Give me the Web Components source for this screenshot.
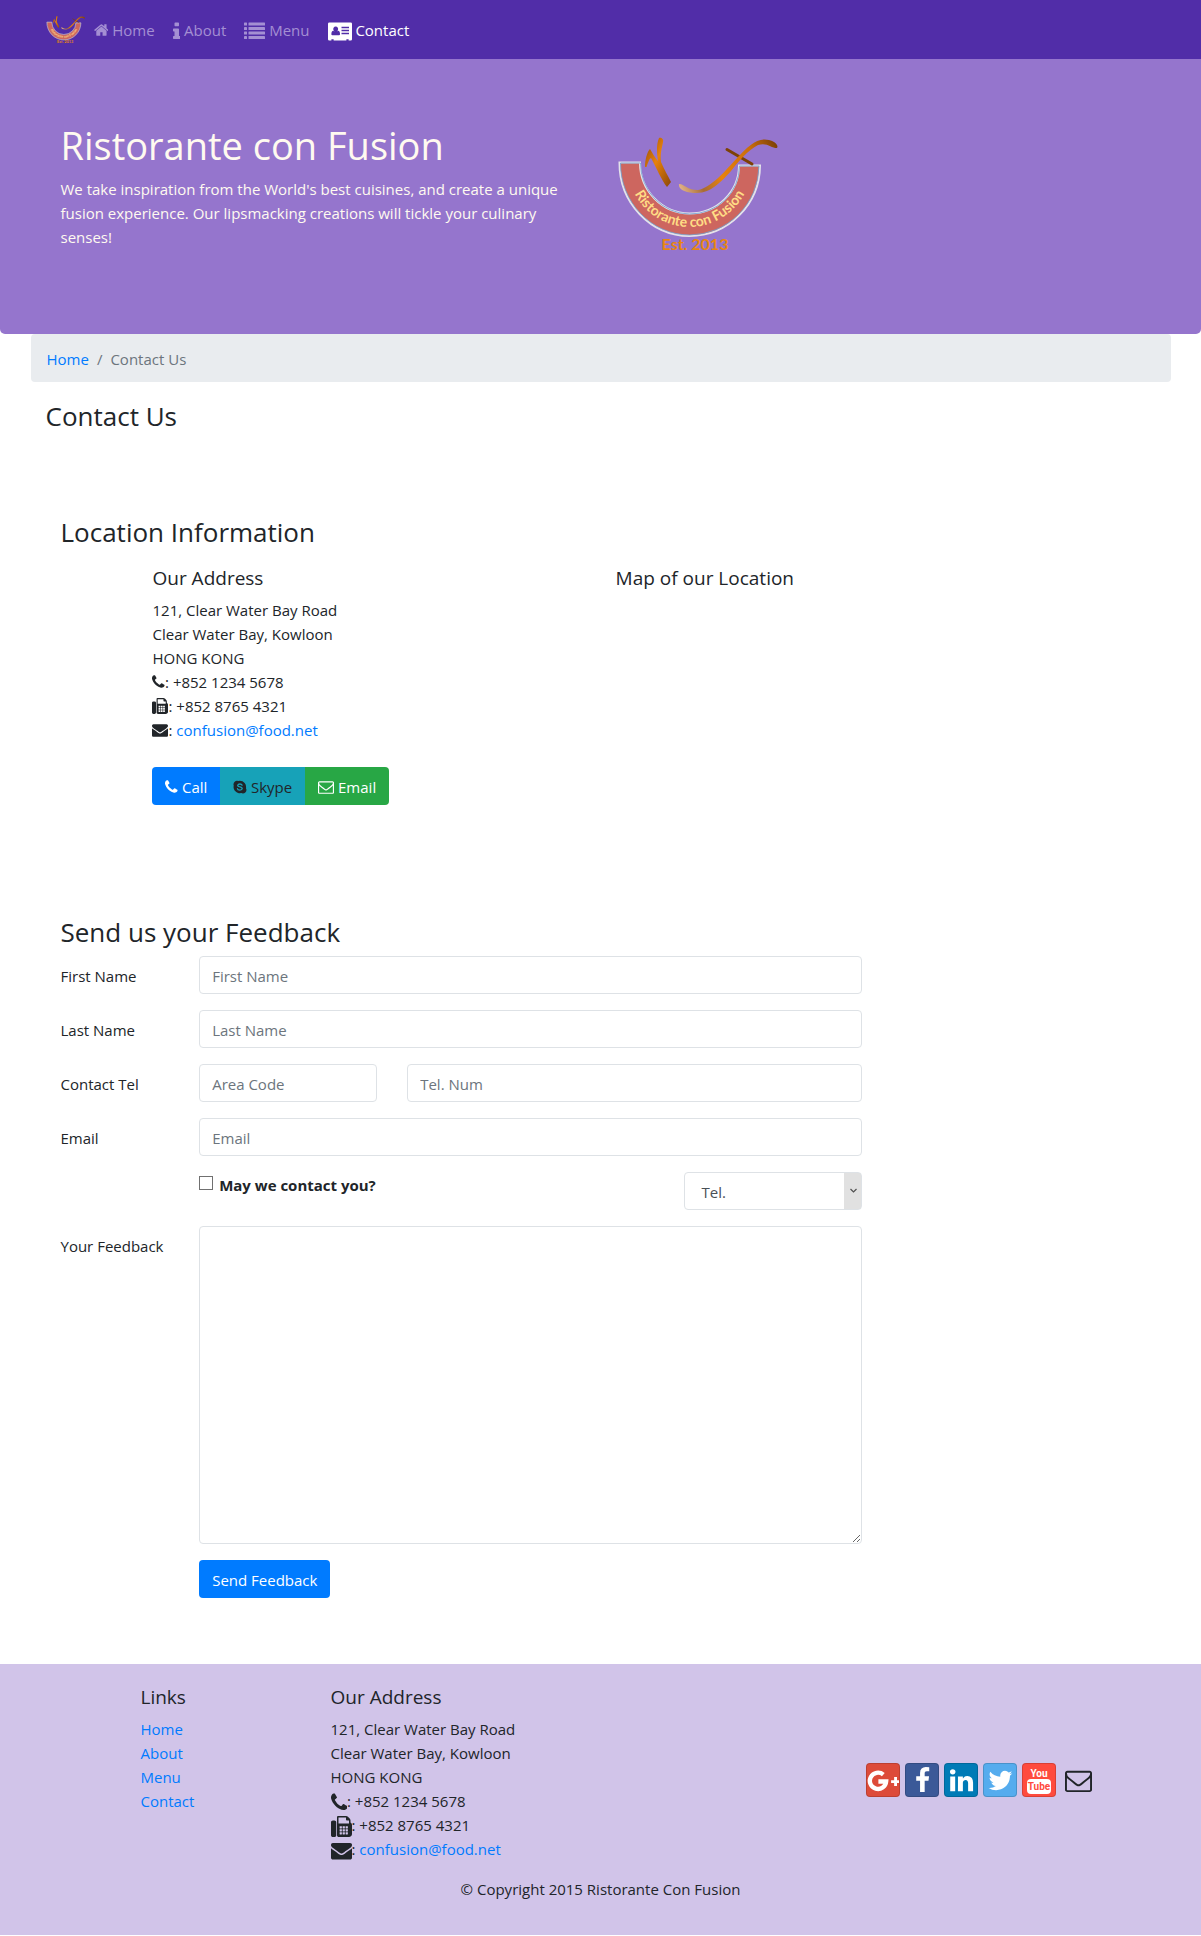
<!DOCTYPE html>
<html lang="en">
<head>
<meta charset="utf-8">
<meta name="viewport" content="width=device-width, initial-scale=1">
<title>Ristorante Con Fusion: Contact Us</title>
<style>
  body {
    margin: 0;
    background: #fff;
    color: #212529;
    font: 15px/24px "Open Sans", "Noto Sans", sans-serif;
  }
</style>
</head>
<body>
<site-nav></site-nav>
<site-hero>
  <span slot="title">Ristorante con Fusion</span>
  We take inspiration from the World's best cuisines, and create a unique fusion experience. Our lipsmacking creations will tickle your culinary senses!
</site-hero>
<main>
  <page-heading>Contact Us</page-heading>
  <location-info></location-info>
  <feedback-form></feedback-form>
</main>
<site-footer></site-footer>

<script>
const key = (x, y) => `M${x} ${y}v-128q0-14-9-23t-23-9h-128q-14 0-23 9t-9 23v128q0 14 9 23t23 9h128q14 0 23-9t9-23z`;
const keys = [928, 1184, 1440].map(x => [1024, 1280, 1536].map(y => key(x, y)).join('')).join('');

/* name: [viewBox x, viewBox width, markup]; every icon is 1792 units high */
const ICONS = {
  home: [64, 1664, '<path d="M1472 992v480q0 26-19 45t-45 19h-384v-384h-256v384h-384q-26 0-45-19t-19-45v-480q0-1 .5-3t.5-3l575-474 575 474q1 2 1 6zm223-69l-62 74q-8 9-21 11h-3q-13 0-21-7l-692-577-692 577q-12 8-24 7-13-2-21-11l-62-74q-8-10-7-23.5t11-21.5l719-599q32-26 76-26t76 26l244 204v-195q0-14 9-23t23-9h192q14 0 23 9t9 23v408l219 182q10 8 11 21.5t-7 23.5z"/>'],
  info: [576, 640, '<path d="M1216 1344v128q0 26-19 45t-45 19h-512q-26 0-45-19t-19-45v-128q0-26 19-45t45-19h64v-384h-64q-26 0-45-19t-19-45v-128q0-26 19-45t45-19h384q26 0 45 19t19 45v576h64q26 0 45 19t19 45zm-128-1152v192q0 26-19 45t-45 19h-256q-26 0-45-19t-19-45v-192q0-26 19-45t45-19h256q26 0 45 19t19 45z"/>'],
  list: [0, 1792, [128, 512, 896, 1280].map(y => `<rect x="0" y="${y}" width="256" height="256" rx="32"/><rect x="384" y="${y}" width="1408" height="256" rx="32"/>`).join('')],
  card: [0, 2048, '<path fill-rule="evenodd" d="M112 128h1824q112 0 112 112v1312q0 112-112 112h-176v-112h-192v112h-1088v-112h-192v112h-176q-112 0-112-112v-1312q0-112 112-112zM656 464a208 224 0 1 0 1 0zM448 832q-160 20-160 300 0 84 84 84h568q84 0 84-84 0-280-160-300-90 84-208 84t-208-84zM1152 480v128h640v-128zM1152 736v128h640v-128zM1152 992v128h640v-128z"/>'],
  phone: [192, 1408, '<path d="M1600 1240q0 27-10 70.5t-21 68.5q-21 50-122 106-94 51-186 51-27 0-53-3.5t-57.5-12.5-47-14.5-55.5-20.5-49-18q-98-35-175-83-127-79-264-216t-216-264q-48-77-83-175-3-9-18-49t-20.5-55.5-14.5-47-12.5-57.5-3.5-53q0-92 51-186 56-101 106-122 25-11 68.5-21t70.5-10q14 0 21 3 18 6 53 76 11 19 30 54t35 63.5 31 53.5q3 4 17.5 25t21.5 35.5 7 28.5q0 20-28.5 50t-62 55-62 53-28.5 46q0 9 5 22.5t8.5 20.5 14 24 11.5 19q76 137 174 235t235 174q2 1 19 11.5t24 14 20.5 8.5 22.5 5q18 0 46-28.5t53-62 55-62 50-28.5q14 0 28.5 7t35.5 21.5 25 17.5q25 15 53.5 31t63.5 35 54 30q70 35 76 53 3 7 3 21z"/>'],
  fax: [0, 1792, `<path fill-rule="evenodd" d="M288 384q66 0 113 47t47 113v1088q0 66-47 113t-113 47h-128q-66 0-113-47t-47-113v-1088q0-66 47-113t113-47h128zm1376 163q58 34 93 93t35 128v768q0 106-75 181t-181 75h-864q-66 0-113-47t-47-113v-1536q0-40 28-68t68-28h672q40 0 88 20t76 48l152 152q28 28 48 76t20 88v163zM1536 640v-256h-160q-40 0-68-28t-28-68v-160h-640v512h896z${keys}"/>`],
  envelope: [0, 1792, '<path d="M1792 710v794q0 66-47 113t-113 47h-1472q-66 0-113-47t-47-113v-794q44 49 101 87 362 246 497 345 57 42 92.5 65.5t94.5 48 110 24.5h2q51 0 110-24.5t94.5-48 92.5-65.5q170-123 498-345 57-39 100-87zm0-294q0 79-49 151t-122 123q-376 261-468 325-10 7-42.5 31t-54 38.5-52 32.5-57.5 27-50 9h-2q-23 0-50-9t-57.5-27-52-32.5-54-38.5-42.5-31q-91-64-262-182.5t-205-142.5q-62-42-117-115.5t-55-136.5q0-78 41.5-130t118.5-52h1472q65 0 112.5 47t47.5 113z"/>'],
  'envelope-o': [0, 1792, '<path d="M1664 1504v-768q-32 36-69 66-268 206-426 338-51 43-83 67t-86.5 48.5-102.5 24.5h-2q-48 0-102.5-24.5t-86.5-48.5-83-67q-158-132-426-338-37-30-69-66v768q0 13 9.5 22.5t22.5 9.5h1472q13 0 22.5-9.5t9.5-22.5zm0-1051v-24.5l-.5-13-3-12.5-5.5-9-9-7.5-14-2.5h-1472q-13 0-22.5 9.5t-9.5 22.5q0 168 147 284 193 152 401 317 6 5 35 29.5t46 37.5 44.5 31.5 50.5 27.5 43 9h2q20 0 43-9t50.5-27.5 44.5-31.5 46-37.5 35-29.5q208-165 401-317 54-43 100.5-115.5t46.5-131.5zm128-37v1088q0 66-47 113t-113 47h-1472q-66 0-113-47t-47-113v-1088q0-66 47-113t113-47h1472q66 0 113 47t47 113z"/>'],
  skype: [128, 1536, '<path d="M896 200a700 700 0 0 1 687 830a400 400 0 0 1-540 540a700 700 0 0 1-834-834a400 400 0 0 1 540-500q70-36 147-36z"/><path d="M1150 690Q1100 560 900 560T650 720Q650 840 900 890T1165 1070Q1150 1240 900 1240T630 1090" fill="none" stroke="#17a2b8" stroke-width="150" stroke-linecap="round"/>'],
  facebook: [0, 1792, '<path d="M1343 12v264h-157q-86 0-116 36t-30 108v189h293l-39 296h-254v759h-306v-759h-255v-296h255v-218q0-186 104-288.5t277-102.5q147 0 228 12z"/>'],
  linkedin: [0, 1792, '<path d="M477 625v991h-330v-991h330zm21-306q1 73-50.5 122t-135.5 49h-2q-82 0-132-49t-50-122q0-74 51.5-122.5t134.5-48.5 133 48.5 51 122.5zm1166 729v568h-329v-530q0-105-40.5-164.5t-126.5-59.5q-63 0-105.5 34.5t-63.5 85.5q-11 30-11 81v553h-329q2-399 2-647t-1-296l-1-48h329v144h-2q20-32 41-56t56.5-52 87-43.5 114.5-15.5q171 0 275 113.5t104 332.5z"/>'],
  twitter: [0, 1792, '<path d="M1684 408q-67 98-162 167 1 14 1 42 0 130-38 259.5t-115.5 248.5-184.5 210.5-258 146-323 54.5q-271 0-496-145 35 4 78 4 225 0 401-138-105-2-188-64.5t-114-159.5q33 5 61 5 43 0 85-11-112-23-185.5-111.5t-73.5-205.5v-4q68 38 146 41-66-44-105-115t-39-154q0-88 44-163 121 149 294.5 238.5t371.5 99.5q-8-38-8-74 0-134 94.5-228.5t228.5-94.5q140 0 236 102 109-21 205-78-37 115-142 178 93-10 186-50z"/>'],
  gplus: [0, 1792, '<path d="M860 560A430 430 0 1 0 1010 920H600" fill="none" stroke="currentColor" stroke-width="230"/><path d="M1430 690h150v160h160v150h-160v160h-150v-160h-160v-150h160z"/>'],
};

function define(name, html, setup) {
  const template = document.createElement('template');
  template.innerHTML = html;
  customElements.define(name, class extends HTMLElement {
    constructor() {
      super();
      this.attachShadow({ mode: 'open' }).append(template.content.cloneNode(true));
    }
    connectedCallback() { if (setup) setup(this, this.shadowRoot); }
  });
}

/* <fa-icon name="phone" large> */
define('fa-icon', `
<style>
  :host { display: inline-block; height: 16px; vertical-align: -2px; line-height: 0; }
  :host([large]) { height: 21px; vertical-align: -6px; }
  :host([huge]) { height: 27px; vertical-align: 0; }
  svg { height: 100%; width: auto; display: block; fill: currentColor; }
</style>
<svg aria-hidden="true"></svg>`, (host, root) => {
  const [x, width, markup] = ICONS[host.getAttribute('name')];
  const svg = root.querySelector('svg');
  svg.setAttribute('viewBox', `${x} 0 ${width} 1792`);
  svg.innerHTML = markup;
});

define('fusion-logo', `
<style>
  :host { display: block; width: 165px; }
  svg { display: block; width: 100%; height: auto; }
  text { font-family: Lato, "Open Sans", sans-serif; font-weight: 700; }
</style>
<svg viewBox="15 9 165 125" role="img" aria-label="Ristorante con Fusion logo">
  <defs>
    <linearGradient id="gold" x1="0" y1="0" x2="1" y2="1">
      <stop offset="0" stop-color="#8a4708"/><stop offset=".45" stop-color="#e8820c"/><stop offset="1" stop-color="#8a4708"/>
    </linearGradient>
    <linearGradient id="sweep" gradientUnits="userSpaceOnUse" x1="78" y1="68" x2="177" y2="24">
      <stop offset="0" stop-color="#e3b48a"/><stop offset=".2" stop-color="#a86b33"/><stop offset=".4" stop-color="#e8820c"/><stop offset=".75" stop-color="#c96d0c"/><stop offset="1" stop-color="#7a3f06"/>
    </linearGradient>
    <path id="arc" d="M26.500 45a62 62 0 0 0 124 0"/>
  </defs>
  <path d="M18.500 42.500H39A49.500 51 0 0 0 88.500 93.500A49.500 48 0 0 0 138 45.500H159A70.500 71 0 0 1 88.500 116A70.500 73 0 0 1 18.500 42.500z" fill="#cd665f" stroke="#e4e2ea" stroke-width="2"/>
  <path d="M19.500 43H39.500A49.500 51 0 0 0 88.500 94A49.500 48 0 0 0 138.500 46H158A70 70 0 0 1 88.500 115A69.500 72 0 0 1 19.500 43z" fill="none" stroke="#6f9fd0" stroke-width=".8"/>
  <g stroke-linejoin="round" stroke-linecap="round">
    <path d="M44 47C44 40 46 32 49 29C52 34 54 38 57 41C56 34 55 25 58 18C60 17 63 19 62 22C61 28 59 33 60 42C63 49 67 56 70 62L66 67C61 61 55 47 50 38C48 39 47 43 45.500 47z" fill="url(#gold)"/>
    <path d="M126 29.500L151 44" stroke="#7d4106" stroke-width="3" fill="none"/>
    <path d="M78 64C82 63 86 70 97 70C110 68 125 50 137 37C147 26 157 17 168 20C173 21 178 25 176 28C170 28 166 22 157 25C147 30 137 42 130 51C121 61 110 73 96 73C86 73 77 70 78 64z" fill="url(#sweep)"/>
  </g>
  <text font-size="14" fill="#ffdc85" text-anchor="middle"><textPath href="#arc" startOffset="50%">Ristorante con Fusion</textPath></text>
  <text x="94" y="130" font-size="16" fill="#e8860f" text-anchor="middle">Est. 2013</text>
</svg>`);

define('site-nav', `
<style>
  :host { display: block; background: #512da8; }
  nav { max-width: 1110px; margin: 0 auto; padding: 8px 15px; display: flex; align-items: center; min-height: 43px; }
  .brand { margin-right: 8px; }
  fusion-logo { width: 40px; }
  ul { display: flex; gap: 18px; margin: 0; padding: 0; list-style: none; }
  li a { color: #a48fd3; text-decoration: none; white-space: nowrap; }
  li a[aria-current] { color: #fff; }
</style>
<nav>
  <a class="brand" href="#" aria-label="Ristorante Con Fusion"><fusion-logo></fusion-logo></a>
  <ul>
    <li><a href="#"><fa-icon name="home"></fa-icon> Home</a></li>
    <li><a href="#"><fa-icon name="info" large></fa-icon> About</a></li>
    <li><a href="#"><fa-icon name="list" large></fa-icon> Menu</a></li>
    <li><a href="#" aria-current="page"><fa-icon name="card" large></fa-icon> Contact</a></li>
  </ul>
</nav>`);

define('site-hero', `
<style>
  :host { display: block; background: #9575cd; color: floralwhite; border-radius: 0 0 5px 5px; }
  header { max-width: 1110px; margin: 0 auto; padding: 62px 15px 69px; display: grid; grid-template-columns: 1fr 1fr; }
  div { padding: 0 15px; }
  .logo { padding-top: 8px; }
  h1 { margin: 0 0 8px; font-size: 38px; line-height: 48px; font-weight: 400; }
  p { margin: 0 0 16px; }
</style>
<header>
  <div><h1><slot name="title"></slot></h1><p><slot></slot></p></div>
  <div class="logo"><fusion-logo></fusion-logo></div>
</header>`);

define('page-heading', `
<style>
  :host { display: block; max-width: 1140px; margin: 0 auto; }
  ol { display: flex; gap: 8px; list-style: none; margin: 0 0 16px; padding: 13px 16px 11px; background: #e9ecef; border-radius: 4px; color: #6c757d; }
  a { color: #007bff; text-decoration: none; }
  li + li::before { content: "/"; padding-right: 8px; }
  h2 { margin: 0; padding: 0 15px; font-size: 26px; line-height: 36px; font-weight: 400; }
</style>
<nav aria-label="breadcrumb"><ol><li><a href="#">Home</a></li><li aria-current="page">Contact Us</li></ol></nav>
<h2><slot></slot></h2>`);

/* Postal address block; `large` switches to the bigger glyphs */
define('postal-address', `
<style>
  :host { display: block; }
  h3 { margin: 0 0 8px; font-size: 19px; line-height: 24px; font-weight: 400; }
  address { font-style: normal; }
  a { color: #007bff; text-decoration: none; }
</style>
<h3>Our Address</h3>
<address>
  121, Clear Water Bay Road<br>
  Clear Water Bay, Kowloon<br>
  HONG KONG<br>
  <fa-icon name="phone"></fa-icon>: +852 1234 5678<br>
  <fa-icon name="fax"></fa-icon>: +852 8765 4321<br>
  <fa-icon name="envelope"></fa-icon>: <a href="mailto:confusion@food.net">confusion@food.net</a>
</address>`, (host, root) => {
  if (host.hasAttribute('large')) root.querySelectorAll('fa-icon').forEach(i => i.setAttribute('large', ''));
});

define('location-info', `
<style>
  :host { display: block; max-width: 1080px; margin: 0 auto; padding: 80px 30px 59px; }
  h2 { margin: 0 0 16px; font-size: 26px; line-height: 36px; font-weight: 400; }
  h3 { margin: 0; font-size: 19px; line-height: 24px; font-weight: 400; }
  .cols { display: grid; grid-template-columns: 15fr 17fr; margin-left: calc(100% / 12 + 2px); }
  .group { display: inline-flex; margin: 25px 0 50px; border-radius: 4px; overflow: hidden; }
  .group a { padding: 8px 13px 6px; color: #fff; text-decoration: none; white-space: nowrap; }
  .call { background: #007bff; }
  .group .skype { background: #17a2b8; color: #212529; }
  .email { background: #28a745; }
</style>
<h2>Location Information</h2>
<div class="cols">
  <div>
    <postal-address></postal-address>
    <div class="group">
      <a class="call" href="tel:+85212345678"><fa-icon name="phone"></fa-icon> Call</a>
      <a class="skype" href="#"><fa-icon name="skype"></fa-icon> Skype</a>
      <a class="email" href="mailto:confusion@food.net"><fa-icon name="envelope-o"></fa-icon> Email</a>
    </div>
  </div>
  <h3>Map of our Location</h3>
</div>`);

define('feedback-form', `
<style>
  :host { display: block; max-width: 1080px; margin: 0 auto; padding: 0 30px 66px; }
  h2 { margin: 0 0 6px; font-size: 26px; line-height: 36px; font-weight: 400; }
  form { width: calc(75% - 8px); display: grid; grid-template-columns: repeat(12, 1fr); gap: 16px 30px; }
  form > label { grid-column: 1 / span 2; padding: 8px 0 6px; white-space: nowrap; }
  .wide { grid-column: 3 / -1; }
  .area { grid-column: 3 / span 3; }
  .tel { grid-column: 6 / -1; }
  input, textarea, select, button { font: inherit; box-sizing: border-box; min-width: 0; margin: 0; }
  input[type=text], input[type=tel], input[type=email], textarea, select {
    width: 100%; height: 38px; padding: 7px 12px 5px; border: 1px solid #dee2e6; border-radius: 4px; background: #fff; color: #495057;
  }
  ::placeholder { color: #6c757d; opacity: 1; }
  textarea.wide { height: 318px; resize: vertical; display: block; }
  .check { grid-column: 3 / span 5; display: flex; gap: 6px; align-items: flex-start; font-weight: 700; }
  .check input { appearance: none; width: 14px; height: 14px; margin-top: 4px; border: 1px solid #707070; background: #fff; }
  .check input:checked { background: #007bff; }
  .check label { padding-top: 1px; }
  .pick { grid-column: 10 / -1; display: grid; }
  .pick select, .pick svg { grid-area: 1 / 1; }
  .pick select { appearance: none; padding-left: 16px; background: linear-gradient(#e1e1e1, #e1e1e1) right / 17px 100% no-repeat #fff; }
  .pick svg { justify-self: end; align-self: center; width: 17px; height: 8px; pointer-events: none; }
  button { justify-self: start; grid-column: 3 / -1; height: 38px; padding: 2px 13px 0; border: 0; border-radius: 4px; background: #007bff; color: #fff; }
</style>
<h2>Send us your Feedback</h2>
<form>
  <label for="first">First Name</label>
  <input class="wide" type="text" id="first" placeholder="First Name">
  <label for="last">Last Name</label>
  <input class="wide" type="text" id="last" placeholder="Last Name">
  <label for="area">Contact Tel</label>
  <input class="area" type="tel" id="area" placeholder="Area Code">
  <input class="tel" type="tel" id="tel" placeholder="Tel. Num" aria-label="Telephone number">
  <label for="email">Email</label>
  <input class="wide" type="email" id="email" placeholder="Email">
  <div class="check"><input type="checkbox" id="approve"><label for="approve">May we contact you?</label></div>
  <div class="pick">
    <select aria-label="Contact by"><option>Tel.</option><option>Email</option></select>
    <svg viewBox="0 0 17 8" aria-hidden="true"><path d="M5.500 2L8.500 5L11.500 2" fill="none" stroke="#505050" stroke-width="1.200"/></svg>
  </div>
  <label for="feedback">Your Feedback</label>
  <textarea class="wide" id="feedback"></textarea>
  <button type="button">Send Feedback</button>
</form>`);

define('social-tile', `
<style>
  :host { display: block; }
  a { display: grid; place-items: center; box-sizing: border-box; width: 34px; height: 34px; border-radius: 4px; color: #fff; background: var(--tile, transparent); overflow: hidden; }
  :host([framed]) a { border: 1px solid rgba(0, 0, 0, .15); }
</style>
<a href="#"><slot></slot></a>`, (host, root) => root.querySelector('a').setAttribute('aria-label', host.getAttribute('label')));

define('site-footer', `
<style>
  :host { display: block; background: #d1c4e9; }
  footer { max-width: 1140px; margin: 0 auto; padding: 21px 0 34px; }
  .cols { display: grid; grid-template-columns: 1fr 2fr 5fr 4fr; }
  .cols > * { padding: 0 15px; }
  h3 { margin: 0 0 8px; font-size: 19px; line-height: 24px; font-weight: 400; }
  ul { margin: 0; padding: 0; list-style: none; }
  li a { color: #007bff; text-decoration: none; }
  .social { display: flex; gap: 5px; justify-content: center; align-items: center; padding-top: 14px; }
  .dark { color: #212529; }
  p { margin: 16px 0 0; text-align: center; }
</style>
<footer>
  <div class="cols">
    <span></span>
    <nav aria-label="Footer">
      <h3>Links</h3>
      <ul><li><a href="#">Home</a></li><li><a href="#">About</a></li><li><a href="#">Menu</a></li><li><a href="#">Contact</a></li></ul>
    </nav>
    <postal-address large></postal-address>
    <div class="social">
      <social-tile framed label="Google+" style="--tile:#dd4b39"><fa-icon name="gplus" style="height:34px"></fa-icon></social-tile>
      <social-tile framed label="Facebook" style="--tile:#3b5998"><fa-icon name="facebook" huge></fa-icon></social-tile>
      <social-tile framed label="LinkedIn" style="--tile:#007bb6"><fa-icon name="linkedin" huge></fa-icon></social-tile>
      <social-tile framed label="Twitter" style="--tile:#55acee"><fa-icon name="twitter" huge></fa-icon></social-tile>
      <social-tile framed label="YouTube" style="--tile:#ff4b3e">
        <svg width="32" height="32" viewBox="0 0 32 32" font-family="Liberation Sans Narrow, Roboto, sans-serif" font-size="10" font-weight="700" text-anchor="middle">
          <text x="16" y="13" fill="#fff">You</text>
          <rect x="4" y="15" width="24" height="15" rx="4" fill="#fff"/>
          <text x="16" y="26" fill="#ff4b3e">Tube</text>
        </svg>
      </social-tile>
      <social-tile label="Email"><fa-icon class="dark" name="envelope-o" huge></fa-icon></social-tile>
    </div>
  </div>
  <p>© Copyright 2015 Ristorante Con Fusion</p>
</footer>`);
</script>
</body>
</html>
